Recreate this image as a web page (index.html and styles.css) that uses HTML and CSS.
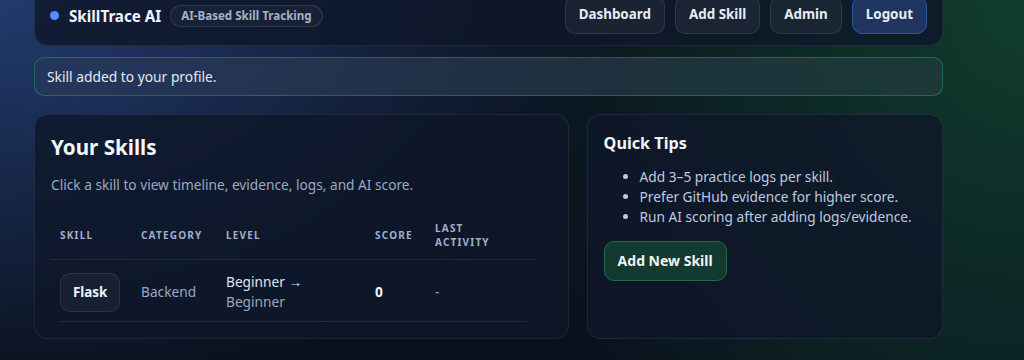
FILE: index.html
```html
<!DOCTYPE html>
<html lang="en">
<head>
<meta charset="utf-8">
<title>SkillTrace AI</title>
<link rel="stylesheet" href="styles.css">
</head>
<body>
<div class="page">
  <header class="topbar">
    <div class="brand">
      <span class="dot"></span>
      <span class="brand-name">SkillTrace AI</span>
      <span class="badge">AI-Based Skill Tracking</span>
    </div>
    <nav class="nav">
      <a class="btn" href="#">Dashboard</a>
      <a class="btn" href="#">Add Skill</a>
      <a class="btn" href="#">Admin</a>
      <a class="btn btn-primary" href="#">Logout</a>
    </nav>
  </header>

  <div class="alert">Skill added to your profile.</div>

  <main class="grid">
    <section class="card">
      <h2 class="card-title">Your Skills</h2>
      <p class="muted">Click a skill to view timeline, evidence, logs, and AI score.</p>
      <div class="table">
        <div class="thead">
          <div class="th">Skill</div>
          <div class="th">Category</div>
          <div class="th">Level</div>
          <div class="th">Score</div>
          <div class="th th-last">Last Activity</div>
        </div>
        <div class="trow">
          <div class="td"><a class="chip" href="#">Flask</a></div>
          <div class="td muted-cell">Backend</div>
          <div class="td level"><span class="lvl-from">Beginner →</span><span class="lvl-to">Beginner</span></div>
          <div class="td score">0</div>
          <div class="td muted-cell">-</div>
        </div>
      </div>
    </section>

    <aside class="card">
      <h3 class="tips-title">Quick Tips</h3>
      <ul class="tips">
        <li>Add 3–5 practice logs per skill.</li>
        <li>Prefer GitHub evidence for higher score.</li>
        <li>Run AI scoring after adding logs/evidence.</li>
      </ul>
      <a class="btn-success" href="#">Add New Skill</a>
    </aside>
  </main>
</div>
</body>
</html>
```

FILE: styles.css
```css
* { box-sizing: border-box; }

html, body { height: 100%; }

body {
  margin: 0;
  font-family: "Noto Sans", "Open Sans", sans-serif;
  color: #e5ecf6;
  background:
    radial-gradient(900px 560px at 0% 0%, rgba(38, 66, 124, 0.85), rgba(38, 66, 124, 0) 70%),
    radial-gradient(760px 900px at 100% 0%, rgba(18, 78, 52, 0.72), rgba(18, 78, 52, 0) 70%),
    #0a111d;
  overflow: hidden;
}

.page {
  width: 909px;
  margin: -16px 0 0 34px;
}

a { text-decoration: none; color: inherit; }

.topbar {
  display: flex;
  align-items: center;
  justify-content: space-between;
  padding: 11px 15px;
  background: rgba(15, 23, 42, 0.82);
  border: 1px solid rgba(148, 163, 184, 0.13);
  border-radius: 14px;
}

.brand {
  display: flex;
  align-items: center;
  padding-top: 1px;
}

.dot {
  width: 9px;
  height: 9px;
  border-radius: 50%;
  background: #5b8cff;
  margin-right: 10px;
}

.brand-name {
  font-weight: 700;
  font-size: 15.2px;
  color: #f1f5fb;
  margin-right: 9px;
}

.badge {
  font-size: 11.6px;
  font-weight: 700;
  color: #a7b3c8;
  height: 22px;
  line-height: 20px;
  padding: 0 10px;
  border: 1px solid rgba(148, 163, 184, 0.2);
  border-radius: 999px;
  background: rgba(255, 255, 255, 0.03);
}

.nav {
  display: flex;
  gap: 10px;
}

.btn {
  display: inline-flex;
  align-items: center;
  height: 38px;
  padding: 0 13px 2px;
  font-size: 13.4px;
  font-weight: 700;
  color: #e7edf7;
  background: rgba(255, 255, 255, 0.05);
  border: 1px solid rgba(148, 163, 184, 0.15);
  border-radius: 10px;
}

.btn-primary {
  background: #1f3560;
  border-color: #2d55a3;
}

.alert {
  margin-top: 11px;
  height: 39px;
  display: flex;
  align-items: center;
  padding: 0 12px;
  font-size: 13.8px;
  color: #e3e9f3;
  border: 1px solid rgba(34, 170, 100, 0.45);
  border-radius: 10px;
  background: linear-gradient(90deg, rgba(40, 56, 92, 0.75), rgba(32, 58, 60, 0.75));
}

.grid {
  margin-top: 18px;
  display: grid;
  grid-template-columns: 1.5fr 1fr;
  gap: 18px;
}

.card {
  padding: 16px;
  background: rgba(15, 23, 42, 0.82);
  border: 1px solid rgba(148, 163, 184, 0.13);
  border-radius: 14px;
}

.card-title {
  margin: 0;
  font-size: 20.6px;
  line-height: 32px;
  font-weight: 700;
  color: #f3f6fb;
}

.muted {
  margin: 12px 0 0;
  font-size: 13.7px;
  line-height: 20px;
  color: #9aa9c2;
}

.table {
  margin-top: 15px;
  width: 487px;
  margin-left: -1px;
}

.thead, .trow {
  display: grid;
  grid-template-columns: 81px 85px 149px 60px 1fr;
  align-items: center;
}

.thead {
  padding: 11px 11px 10px 10px;
  border-bottom: 1px solid rgba(148, 163, 184, 0.14);
}

.th {
  font-size: 10px;
  line-height: 14px;
  font-weight: 700;
  letter-spacing: 1.2px;
  text-transform: uppercase;
  color: #9fb0c9;
}

.th-last { max-width: 70px; }

.trow {
  margin: 0 10px 0 10px;
  padding: 12px 0 9px;
  border-bottom: 1px solid rgba(148, 163, 184, 0.14);
}

.td {
  font-size: 13.7px;
  line-height: 20px;
}

.chip {
  display: inline-flex;
  align-items: center;
  height: 39px;
  padding: 0 12px 1px;
  font-size: 13.4px;
  font-weight: 700;
  color: #f1f5fb;
  background: rgba(255, 255, 255, 0.04);
  border: 1px solid rgba(148, 163, 184, 0.15);
  border-radius: 10px;
}

.muted-cell { color: #98a7bf; }

.level { display: flex; flex-direction: column; }
.lvl-from { color: #dde5f1; }
.lvl-to { color: #98a7bf; }

.score { font-weight: 700; color: #f3f6fb; }

.tips-title {
  margin: 0;
  font-size: 16.2px;
  line-height: 24px;
  font-weight: 700;
  color: #f3f6fb;
}

.tips {
  margin: 12px 0 0;
  padding-left: 36px;
  font-size: 13.7px;
  line-height: 20px;
  color: #bfcae0;
}

.btn-success {
  display: inline-flex;
  align-items: center;
  margin-top: 14px;
  height: 40px;
  padding: 0 13px 1px;
  font-size: 14px;
  font-weight: 700;
  color: #eef4f8;
  background: #133a2f;
  border: 1px solid #1f6c47;
  border-radius: 10px;
}
```
